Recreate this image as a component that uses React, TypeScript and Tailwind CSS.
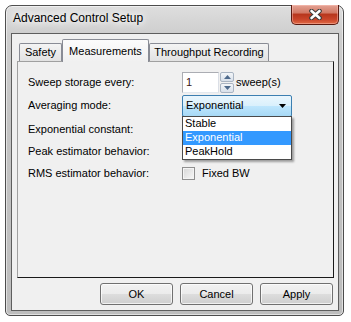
import React from "react";

const btn =
  "w-[73px] h-[22px] flex items-center justify-center rounded-[3px] border border-[#707070] bg-[linear-gradient(#f2f2f2_0%,#ebebeb_50%,#dddddd_50%,#cfcfcf_100%)] shadow-[inset_0_0_0_1px_rgba(255,255,255,0.7)] text-[11px] text-black";

function CloseButton() {
  return (
    <div className="mt-[-1px] mr-[4px] ml-auto w-[48px] h-[20px] rounded-b-[5px] border border-t-0 border-[#5a1a10] bg-[linear-gradient(#e4a395_0%,#d27a66_40%,#b8371d_50%,#c9452a_75%,#e06a45_100%)] shadow-[inset_0_0_0_1px_rgba(255,200,190,0.45)] flex items-center justify-center">
      <svg width="13" height="11" viewBox="0 0 13 11">
        <path d="M2.5 2 L10.5 9 M10.5 2 L2.5 9" stroke="#3a3a3a" strokeWidth="4.6" strokeLinecap="round" />
        <path d="M2.5 2 L10.5 9 M10.5 2 L2.5 9" stroke="#ffffff" strokeWidth="2.6" strokeLinecap="round" />
      </svg>
    </div>
  );
}

function Spinner() {
  return (
    <div className="flex items-center h-[21px]">
      <div className="w-[37px] h-[21px] bg-white border border-[#abadb3] border-b-[#e3e9ef] border-r-[#dbdfe6] flex items-center pl-[3px] text-[11px] text-[#3a1414]">
        1
      </div>
      <div className="ml-[1px] w-[14px] h-[21px] flex flex-col gap-[1px]">
        <div className="h-[10px] rounded-[2px] border border-[#a9b4c2] bg-[linear-gradient(#f3f6f9,#d8e0ea)] flex items-center justify-center">
          <svg width="7" height="4" viewBox="0 0 7 4">
            <path d="M0 4 L3.5 0 L7 4 Z" fill="#4e6a8c" />
          </svg>
        </div>
        <div className="h-[10px] rounded-[2px] border border-[#a9b4c2] bg-[linear-gradient(#f3f6f9,#d8e0ea)] flex items-center justify-center">
          <svg width="7" height="4" viewBox="0 0 7 4">
            <path d="M0 0 L7 0 L3.5 4 Z" fill="#4e6a8c" />
          </svg>
        </div>
      </div>
      <span className="ml-[2px] text-[11px] text-black">sweep(s)</span>
    </div>
  );
}

function Combo() {
  const items = ["Stable", "Exponential", "PeakHold"];
  return (
    <div className="relative w-[110px]">
      <div className="h-[22px] rounded-[2px] border border-[#3c7fb1] bg-[linear-gradient(#eaf6fd_0%,#d9f0fc_50%,#bee6fd_50%,#a7d9f5_100%)] flex items-center pl-[3px] pr-[5px] text-[11px] text-black">
        <span>Exponential</span>
        <svg className="ml-auto" width="7" height="4" viewBox="0 0 7 4">
          <path d="M0 0 L7 0 L3.5 4 Z" fill="#000" />
        </svg>
      </div>
      <div className="absolute left-0 top-[21px] z-20 w-[110px] bg-white border border-[#4a4a4a] shadow-[2px_2px_2px_rgba(0,0,0,0.35)]">
        {items.map((it) => (
          <div
            key={it}
            className={
              it === "Exponential"
                ? "h-[14px] pl-[2px] flex items-center text-[11px] bg-[#3399ff] text-white"
                : "h-[14px] pl-[2px] flex items-center text-[11px] text-black"
            }
          >
            {it}
          </div>
        ))}
      </div>
    </div>
  );
}

export default function App() {
  return (
    <div className="w-[351px] h-[322px] bg-white pt-[5px] pl-[5px] font-['Liberation_Sans',Arial,sans-serif]">
      <div className="w-[339px] h-[311px] flex flex-col rounded-t-[7px] rounded-b-[5px] border border-[#4c4c4c] bg-[linear-gradient(#dedede_0px,#cdcdcd_30px,#c3c3c3_120px,#bdbdbd_100%)] shadow-[inset_0_0_0_1px_rgba(255,255,255,0.55)]">
        {/* Title bar */}
        <div className="h-[27px] flex items-start">
          <span className="pl-[7px] pt-[5px] text-[12px] leading-[15px] text-black [text-shadow:0_0_6px_#fff,0_0_10px_#fff,0_0_14px_#fff]">
            Advanced Control Setup
          </span>
          <CloseButton />
        </div>

        {/* Client area */}
        <div className="ml-[5px] mr-[4px] mb-[4px] flex-1 flex flex-col border border-[#5e5e5e] bg-[#f0f0f0] pt-[5px] pl-[5px] pr-[4px]">
          {/* Tabs */}
          <div className="ml-[2px] h-[22px] flex items-end text-[11px] text-black">
            <div className="w-[43px] h-[18px] flex items-center justify-center border border-b-0 border-[#898c95] rounded-t-[2px] bg-[linear-gradient(#f4f4f4,#e2e2e2)]">
              Safety
            </div>
            <div className="relative z-10 w-[87px] h-[23px] mb-[-1px] flex items-start justify-center pt-[3px] border border-b-0 border-[#898c95] rounded-t-[2px] bg-[linear-gradient(#fcfcfc,#f0f0f0)]">
              Measurements
            </div>
            <div className="w-[120px] h-[18px] flex items-center justify-center border border-b-0 border-[#898c95] rounded-t-[2px] bg-[linear-gradient(#f4f4f4,#e2e2e2)]">
              Throughput Recording
            </div>
          </div>

          {/* Tab panel */}
          <div className="w-[317px] h-[217px] border border-[#a0a0a0] border-r-[#1a1a1a] border-b-[#1a1a1a] bg-[#f0f0f0] pt-[10px] pl-[10px] text-[11px] text-black">
            <div className="h-[21px] flex items-center">
              <span className="w-[154px]">Sweep storage every:</span>
              <Spinner />
            </div>
            <div className="h-[25px] flex items-center">
              <span className="w-[154px]">Averaging mode:</span>
              <Combo />
            </div>
            <div className="h-[23px] flex items-center">
              <span className="w-[154px]">Exponential constant:</span>
            </div>
            <div className="h-[21px] flex items-center">
              <span className="w-[154px]">Peak estimator behavior:</span>
            </div>
            <div className="h-[22px] flex items-center">
              <span className="w-[154px]">RMS estimator behavior:</span>
              <div className="w-[13px] h-[13px] border border-[#8f8f8f] bg-[linear-gradient(135deg,#d6d6d6,#f8f8f8)] shadow-[inset_0_0_0_1px_#f4f4f4]" />
              <span className="ml-[7px]">Fixed BW</span>
            </div>
          </div>

          {/* Buttons */}
          <div className="mt-[5px] flex justify-end gap-[7px] pr-[1px]">
            <div className={btn}>OK</div>
            <div className={btn}>Cancel</div>
            <div className={btn}>Apply</div>
          </div>
        </div>
      </div>
    </div>
  );
}
